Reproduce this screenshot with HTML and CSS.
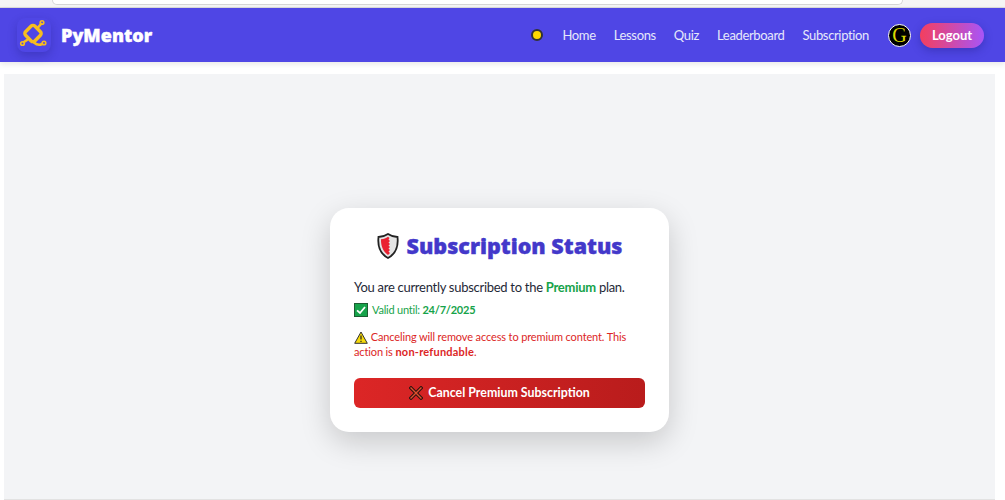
FILE: index.html
```html
<!DOCTYPE html>
<html lang="en">
<head>
  <meta charset="UTF-8">
  <meta name="viewport" content="width=device-width, initial-scale=1.0">
  <title>PyMentor</title>
  <link rel="stylesheet" href="styles.css">
</head>
<body>
  <div class="browser-strip">
    <div class="address-bar"></div>
  </div>

  <nav class="navbar">
    <a class="brand" href="#">
      <span class="brand-icon">
        <svg viewBox="0 0 32 32" width="32" height="32" fill="none" stroke="#f7bd1f" stroke-width="3.400" stroke-linecap="round" stroke-linejoin="round">
          <rect x="8.500" y="8" width="13" height="13" rx="2.500" transform="rotate(45 15 14.500)"/>
          <path d="M20 8.500 L23 5" stroke-width="2.600"/>
          <circle cx="24" cy="3.500" r="1.800" stroke-width="1.600"/>
          <path d="M9 21 L6 23" stroke-width="2.600"/>
          <circle cx="4.500" cy="24.500" r="1.800" stroke-width="1.600"/>
          <path d="M16 23.500 Q20 27 24 25" stroke-width="2.600"/>
          <circle cx="26" cy="24" r="1.800" stroke-width="1.600"/>
        </svg>
      </span>
      <span class="brand-name">PyMentor</span>
    </a>
    <div class="nav-links">
      <span class="theme-dot"></span>
      <a href="#">Home</a>
      <a href="#">Lessons</a>
      <a href="#">Quiz</a>
      <a href="#">Leaderboard</a>
      <a href="#">Subscription</a>
      <span class="avatar">G</span>
      <button class="logout">Logout</button>
    </div>
  </nav>

  <main class="content">
    <section class="card">
      <h1 class="card-title">
        <svg class="shield" viewBox="0 0 22 26" width="22" height="26">
          <path d="M11 1 C14 3 17 4 20.500 4 C21.500 13 18.500 21 11 25 C3.500 21 .5 13 1.500 4 C5 4 8 3 11 1 Z" fill="#e4e4e4" stroke="#222" stroke-width="1.800"/>
          <path d="M11 3.800 C9 5.300 7 6 4 6.300 C3.800 13 6 18.500 11 22 L13 20 L11.500 18.500 L13 17 L11.500 15.500 L13 14 L11.500 12.500 L13 11 L11.500 9.500 L13 8 L11.500 6.500 L12.500 5 Z" fill="#ea2030"/>
        </svg>
        Subscription Status
      </h1>
      <p class="plan-line">You are currently subscribed to the <strong class="plan-name">Premium</strong> plan.</p>
      <p class="valid-line">
        <svg class="inline-icon" viewBox="0 0 14 14" width="14" height="14">
          <rect x=".5" y=".5" width="13" height="13" fill="#16a34a" stroke="#1d5c32"/>
          <path d="M3 7.300 L6 10 L11 4" fill="none" stroke="#fff" stroke-width="1.800"/>
        </svg>
        <span>Valid until: <strong>24/7/2025</strong></span>
      </p>
      <p class="warning">
        <svg class="inline-icon" viewBox="0 0 14 13" width="14" height="13">
          <path d="M7 1 L13.300 12.300 H.7 Z" fill="#f5d90a" stroke="#333" stroke-linejoin="round"/>
          <path d="M7 4.500 V8.500 M7 9.800 V11" stroke="#222" stroke-width="1.200"/>
        </svg>
        Canceling will remove access to premium content. This action is <strong>non-refundable</strong>.
      </p>
      <button class="cancel">
        <svg viewBox="0 0 14 14" width="14" height="14">
          <path d="M2 2 L12 12 M12 2 L2 12" stroke="#2a1410" stroke-width="3.400" stroke-linecap="square"/>
          <path d="M2 2 L12 12 M12 2 L2 12" stroke="#e2502e" stroke-width="1.400" stroke-linecap="square"/>
        </svg>
        Cancel Premium Subscription
      </button>
    </section>
  </main>
</body>
</html>
```

FILE: styles.css
```css
body {
  margin: 0;
  background-color: #fff;
  font-family: Lato, "Open Sans", sans-serif;
  height: 500px;
  overflow: hidden;
  display: flex;
  flex-direction: column;
}

.browser-strip {
  height: 7px;
  background-color: #f5f5f5;
  border-bottom: 1px solid #dcdcdc;
  padding: 0 102px 0 52px;
  overflow: hidden;
}

.address-bar {
  height: 4px;
  background-color: #fff;
  border: 1px solid #d6d6d6;
  border-top: 0;
  border-radius: 0 0 10px 10px;
}

.navbar {
  height: 54px;
  flex-shrink: 0;
  background-color: #4f46e5;
  box-shadow: 0 2px 6px rgba(0, 0, 0, 0.1);
  display: flex;
  align-items: center;
  justify-content: space-between;
  padding: 0 21px 0 17px;
}

.brand {
  display: flex;
  align-items: center;
  gap: 10px;
  text-decoration: none;
}

.brand-icon {
  width: 34px;
  height: 34px;
  display: flex;
  align-items: center;
  justify-content: center;
  border-radius: 8px;
  box-shadow: 0 4px 10px rgba(30, 25, 120, 0.3);
}

.brand-name {
  color: #fff;
  font-family: "Noto Sans", sans-serif;
  font-size: 18px;
  font-weight: 900;
  -webkit-text-stroke: 0.4px #fff;
}

.nav-links {
  display: flex;
  align-items: center;
  gap: 18px;
}

.nav-links a {
  color: #e6e8fb;
  font-size: 13px;
  letter-spacing: -0.35px;
  text-decoration: none;
}

.theme-dot {
  width: 8px;
  height: 8px;
  margin-right: 1px;
  border-radius: 50%;
  background-color: #ffd900;
  border: 2px solid #333;
}

.avatar {
  width: 21px;
  height: 21px;
  margin-left: 1px;
  border-radius: 50%;
  background-color: #000;
  border: 1px solid #fff;
  color: #d8d800;
  font-family: "Liberation Serif", serif;
  font-size: 20px;
  line-height: 21px;
  text-align: center;
}

.logout {
  width: 64px;
  height: 25px;
  margin-left: -9px;
  padding: 0;
  border: 0;
  border-radius: 13px;
  background: linear-gradient(90deg, #f43f5e, #a855f7);
  box-shadow: 0 3px 8px rgba(30, 25, 120, 0.35);
  color: #fff;
  font-family: inherit;
  font-size: 13px;
  font-weight: 700;
}

.content {
  flex: 1;
  margin: 12px 10px 0 4px;
  padding-top: 68px;
  background-color: #f3f4f6;
  border-bottom: 1px solid #e2e2e2;
  display: flex;
  align-items: center;
  justify-content: center;
}

.card {
  width: 291px;
  height: 178px;
  padding: 23px 24px;
  background-color: #fff;
  border-radius: 19px;
  box-shadow: 0 10px 30px rgba(0, 0, 0, 0.18);
  margin-top: -2px;
}

.card-title {
  margin: 0 0 17px;
  color: #4338ca;
  font-family: "Noto Sans", sans-serif;
  font-size: 21.500px;
  font-weight: 900;
  line-height: 30px;
  -webkit-text-stroke: 0.4px #4338ca;
  display: flex;
  align-items: center;
  justify-content: center;
  gap: 8px;
}

.plan-line {
  margin: 0 0 6px;
  color: #1f2937;
  font-size: 13px;
  letter-spacing: -0.28px;
  line-height: 18px;
}

.plan-name {
  color: #16a34a;
}

.valid-line {
  margin: 0 0 11px;
  color: #16a34a;
  font-size: 11px;
  letter-spacing: -0.22px;
  line-height: 16px;
  display: flex;
  align-items: center;
  gap: 4px;
}

.inline-icon {
  vertical-align: -3px;
}

.warning {
  margin: 0 0 19px;
  color: #dc2626;
  font-size: 11px;
  letter-spacing: -0.13px;
  line-height: 15px;
}

.warning strong {
  letter-spacing: 0.22px;
}

.cancel {
  width: 100%;
  height: 30px;
  border: 0;
  border-radius: 6px;
  background: linear-gradient(90deg, #dc2626, #b91c1c);
  color: #fff;
  font-family: inherit;
  font-size: 12.400px;
  font-weight: 700;
  display: flex;
  align-items: center;
  justify-content: center;
  gap: 5px;
}
```
